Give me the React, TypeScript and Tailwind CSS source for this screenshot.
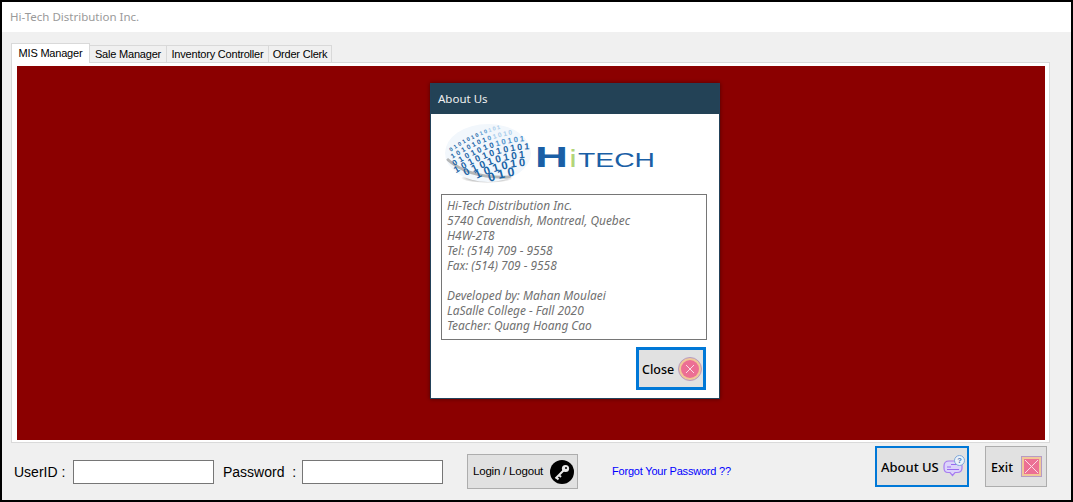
const TABS = [
  { label: 'Sale Manager', width: 'w-[77px]' },
  { label: 'Inventory Controller', width: 'w-[102px]' },
  { label: 'Order Clerk', width: 'w-[63px]' },
];

const ABOUT_LINES = [
  'Hi-Tech Distribution Inc.',
  '5740 Cavendish, Montreal, Quebec',
  'H4W-2T8',
  'Tel: (514) 709 - 9558',
  'Fax: (514) 709 - 9558',
  '\u00a0',
  'Developed by: Mahan Moulaei',
  'LaSalle College - Fall 2020',
  'Teacher: Quang Hoang Cao',
];

/** globe digits, laid along slanted curved rows */
const globeDigits = () => {
  const digits = [];
  for (let row = 0; row < 8; row++) {
    const base = 8 + row * 8;
    const size = 5.5 + row * 1.15;
    const step = size * 0.78;
    let bit = row % 2;
    for (let x = 2 + row; x < 86; x += step) {
      const dx = x - 43;
      const y = base - 0.36 * dx + 0.004 * dx * dx;
      const inside = (dx * dx) / (42 * 42) + ((y - 30) * (y - 30)) / (27 * 27);
      if (inside > 0.95) continue;
      const angle = (Math.atan(-0.36 + 0.008 * dx) * 180) / Math.PI;
      const pole = ((x - 60) * (x - 60)) / 500 + ((y - 9) * (y - 9)) / 130;
      digits.push({
        key: `${row}-${x}`,
        x,
        y,
        size,
        angle,
        value: bit ? '1' : '0',
        fill: pole < 0.5 ? '#a9cdeb' : pole < 1.3 ? '#4f93cd' : '#1a64a6',
      });
      bit = 1 - bit;
    }
  }
  return digits;
};

const HitechLogo = () => (
  <svg width="212" height="62" viewBox="0 0 212 62" className="block">
    <defs>
      <clipPath id="globe-clip">
        <ellipse cx="43" cy="30" rx="43" ry="29" />
      </clipPath>
      <radialGradient id="globe-shadow">
        <stop offset="0%" stopColor="#2b2b2b" />
        <stop offset="100%" stopColor="#ffffff" />
      </radialGradient>
    </defs>
    <ellipse cx="42" cy="55" rx="26" ry="5" fill="url(#globe-shadow)" />
    <ellipse cx="43" cy="30" rx="43" ry="29" fill="#f2f7fc" />
    <path d="M2 36 Q24 56 66 54" stroke="#9a9a9a" strokeWidth="3" fill="none" opacity="0.7" clipPath="url(#globe-clip)" />
    <g fontFamily="'Liberation Sans', sans-serif" fontWeight="700">
      {globeDigits().map((d) => (
        <text
          key={d.key}
          x={d.x}
          y={d.y}
          fontSize={d.size}
          fill={d.fill}
          textAnchor="middle"
          dominantBaseline="middle"
          transform={`rotate(${d.angle} ${d.x} ${d.y})`}
        >
          {d.value}
        </text>
      ))}
    </g>
    <g fontFamily="'Liberation Sans', sans-serif">
      <text x="90" y="44" fontSize="30" fontWeight="700" fill="#1a5fa6" textLength="33" lengthAdjust="spacingAndGlyphs">
        H
      </text>
      <text x="125" y="44" fontSize="23" fontWeight="700" fill="#b3d57a" textLength="6" lengthAdjust="spacingAndGlyphs">
        i
      </text>
      <text x="133" y="44" fontSize="21" fill="#1a5fa6" textLength="77" lengthAdjust="spacingAndGlyphs">
        TECH
      </text>
    </g>
  </svg>
);

const CloseIcon = () => (
  <svg width="24" height="24" viewBox="0 0 24 24">
    <circle cx="12" cy="12" r="11.5" fill="#f0c898" stroke="#b79ac4" />
    <circle cx="12" cy="12" r="9" fill="#ec6f94" />
    <path d="M8 8 L16 16 M16 8 L8 16" stroke="#fbdbe4" strokeWidth="1" />
  </svg>
);

const ExitIcon = () => (
  <svg width="21" height="21" viewBox="0 0 21 21">
    <rect x="0.5" y="0.5" width="20" height="20" fill="#f0c898" stroke="#b79ac4" />
    <rect x="3" y="3" width="15" height="15" fill="#ec6f94" />
    <path d="M4 4 L17 17 M17 4 L4 17" stroke="#fbdbe4" strokeWidth="1" />
  </svg>
);

const KeyIcon = () => (
  <svg width="24" height="24" viewBox="0 0 24 24">
    <circle cx="12" cy="12" r="12" fill="#000000" />
    <circle cx="15.5" cy="8.5" r="3.6" fill="#e8e8e8" />
    <circle cx="16" cy="8" r="1" fill="#000000" />
    <path d="M13.5 10.5 L5.5 18.5 M6.5 17.5 L8.5 19.5 M9 15 L11 17" stroke="#e8e8e8" strokeWidth="2" fill="none" />
  </svg>
);

const AboutIcon = () => (
  <svg width="22" height="24" viewBox="0 0 22 24" fill="none">
    <path
      d="M6 6 H14 Q19 6 19 11 V13 Q19 17.5 14 17.5 H12 L9.5 20.5 L7 17.5 H5 Q1 17.5 1 13 V11 Q1 6 6 6 Z"
      fill="#dcd3fb"
      stroke="#a77cf0"
      strokeWidth="1.2"
    />
    <path d="M4 12 H8 M4 14.5 H16 M8 9.5 H15" stroke="#9a6cf0" strokeWidth="1.2" />
    <circle cx="16.5" cy="5.5" r="5" fill="#e9f2fb" stroke="#7fa8d8" />
    <text x="16.5" y="8" fontSize="7.5" fontWeight="700" fontFamily="'Liberation Sans', sans-serif" fill="#4d79b8" textAnchor="middle">
      ?
    </text>
  </svg>
);

const AboutDialog = () => (
  <div className="absolute left-[413px] top-[17px] flex h-[316px] w-[290px] flex-col border border-[#23425a] bg-white shadow-[0_0_4px_rgba(0,0,0,0.45)]">
    <div className="flex h-[30px] items-center bg-[#234256] pl-[7px] font-['Noto_Sans',sans-serif] text-[11.5px] text-[#f0f0f0]">
      About Us
    </div>
    <div className="pl-[14px] pt-[9px]">
      <HitechLogo />
    </div>
    <div className="mx-[10px] mt-[9px] h-[146px] w-[266px] border border-[#767676] pl-[5px] pt-[3px] font-['Noto_Sans',sans-serif] text-[11.9px] italic leading-[15px] text-[#707070]">
      {ABOUT_LINES.map((line, index) => (
        <p key={index}>{line}</p>
      ))}
    </div>
    <div className="mr-[13px] mt-[7px] flex justify-end">
      <button className="flex h-[43px] w-[70px] items-center justify-between border-[3px] border-[#0078d7] bg-[#e1e1e1] pl-[3px] pr-[1px] pt-[1px] font-['Noto_Sans',sans-serif] text-[12.5px] font-medium text-black">
        <span className="pt-[2px]">Close</span>
        <CloseIcon />
      </button>
    </div>
  </div>
);

const App = () => {
  return (
    <div className="flex h-[502px] w-[1073px] flex-col overflow-hidden border-2 border-black bg-[#f0f0f0]">
      {/* 타이틀 바 */}
      <div className="flex h-[30px] shrink-0 items-center bg-white pl-[8px] font-['Noto_Sans',sans-serif] text-[11.5px] text-[#9a9a9a]">
        Hi-Tech Distribution Inc.
      </div>

      {/* 탭 */}
      <div className="ml-[9px] mr-[21px] mt-[11px] flex h-[19px] shrink-0 items-end font-['Liberation_Sans',sans-serif] text-[11px] tracking-[-0.2px] text-black">
        <div className="z-10 -mb-px flex h-[20px] w-[79px] items-center justify-center border border-b-0 border-[#d9d9d9] bg-white">
          MIS Manager
        </div>
        {TABS.map((tab) => (
          <div
            key={tab.label}
            className={`flex h-[17px] items-center justify-center border border-l-0 border-b-0 border-[#d9d9d9] bg-[#f0f0f0] pt-[1px] ${tab.width}`}
          >
            {tab.label}
          </div>
        ))}
      </div>

      {/* 본문 패널 */}
      <div className="ml-[9px] mr-[21px] flex h-[381px] shrink-0 border border-[#d9d9d9] bg-white pb-[2px] pl-[5px] pr-[4px] pt-[3px]">
        <div className="relative flex-1 bg-[#8b0000]">
          <AboutDialog />
        </div>
      </div>

      {/* 하단 로그인 영역 */}
      <div className="flex flex-1 items-start font-['Liberation_Sans',sans-serif] text-black">
        <label className="ml-[12px] mt-[20px] w-[59px] text-[14px] leading-[18px]">UserID :</label>
        <input className="mt-[17px] h-[24px] w-[141px] border border-[#767676] bg-white" />
        <label className="ml-[9px] mt-[20px] w-[79px] whitespace-pre text-[14px] leading-[18px]">{'Password  :'}</label>
        <input className="mt-[17px] h-[24px] w-[141px] border border-[#767676] bg-white" />
        <button className="ml-[24px] mt-[11px] flex h-[35px] w-[111px] items-center justify-between border border-[#adadad] bg-[#e1e1e1] pl-[5px] pr-[3px] text-[11.5px] tracking-[-0.2px]">
          Login / Logout
          <KeyIcon />
        </button>
        <a className="ml-[34px] mt-[21px] w-[263px] text-[11px] leading-[14px] tracking-[-0.2px] text-[#0000ff]">Forgot Your Password ??</a>
        <button className="mt-[3px] flex h-[41px] w-[94px] items-center justify-between border-2 border-[#0078d7] bg-[#e1e1e1] pl-[4px] pr-[2px] font-['Noto_Sans',sans-serif] text-[13px] font-medium">
          <span className="pt-[3px]">About US</span>
          <AboutIcon />
        </button>
        <button className="ml-[16px] mt-[3px] flex h-[41px] w-[62px] items-center justify-between border border-[#adadad] bg-[#e1e1e1] pl-[5px] pr-[4px] font-['Noto_Sans',sans-serif] text-[12.5px] font-medium">
          <span className="pt-[3px]">Exit</span>
          <ExitIcon />
        </button>
      </div>
    </div>
  );
};

export default App;
